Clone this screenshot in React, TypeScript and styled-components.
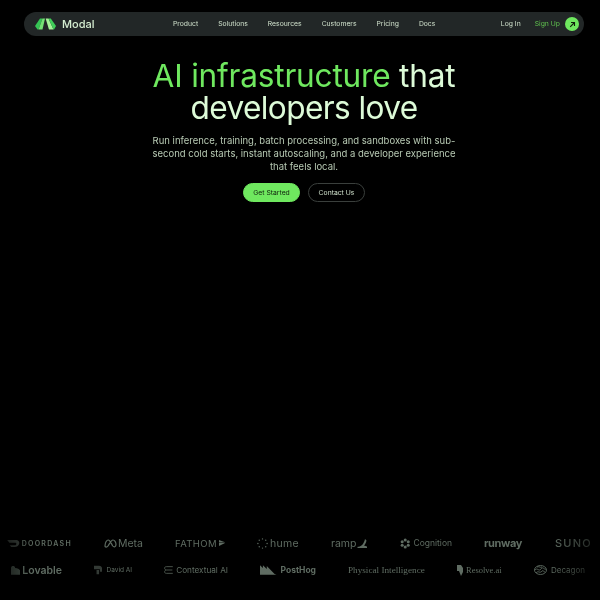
import React from "react";
import styled, { createGlobalStyle } from "styled-components";

const NAV_LINKS = ["Product", "Solutions", "Resources", "Customers", "Pricing", "Docs"];

const GlobalStyle = createGlobalStyle`
  html, body {
    margin: 0;
    padding: 0;
    background: #000000;
    overflow: hidden;
  }
  * {
    box-sizing: border-box;
  }
`;

const Page = styled.div`
  width: 600px;
  height: 600px;
  padding: 12px 16px 0 24px;
  display: flex;
  flex-direction: column;
  align-items: center;
  background: #000000;
  font-family: Inter, "Liberation Sans", sans-serif;
  overflow: hidden;
`;

const Nav = styled.nav`
  width: 560px;
  height: 24px;
  flex: none;
  padding: 0 5px 0 11px;
  display: flex;
  align-items: center;
  border-radius: 12px;
  background: #222727;
  will-change: transform;
`;

const Brand = styled.div`
  display: flex;
  align-items: center;
  gap: 6px;
  width: 138px;
  color: #d6efd2;
  font-size: 11px;
  font-weight: 500;
`;

const NavLinks = styled.div`
  display: flex;
  gap: 20px;
  flex: 1;
`;

const NavLink = styled.a<{ $accent?: boolean }>`
  color: ${(props) => (props.$accent ? "#5fc04e" : "#cfe0cb")};
  font-size: 6.8px;
  line-height: 24px;
`;

const NavActions = styled.div`
  display: flex;
  align-items: center;
  gap: 14px;
`;

const SignUp = styled.div`
  display: flex;
  align-items: center;
  gap: 5px;
`;

const ArrowBadge = styled.span`
  width: 14px;
  height: 14px;
  border-radius: 50%;
  display: flex;
  align-items: center;
  justify-content: center;
  background: #6fe85f;
`;

const Hero = styled.section`
  margin-top: 24px;
  display: flex;
  flex-direction: column;
  align-items: center;
  will-change: transform;
`;

const Title = styled.h1`
  margin: 0;
  width: 340px;
  text-align: center;
  color: #ddfbd8;
  font-size: 31.6px;
  line-height: 32px;
  font-weight: 400;
`;

const TitleLine = styled.span<{ $spacing: number }>`
  display: block;
  letter-spacing: ${(props) => props.$spacing}px;
`;

const Highlight = styled.span`
  color: #6fe85f;
`;

const Lead = styled.p`
  margin: 10px 0 0;
  width: 320px;
  text-align: center;
  color: #b7c9b3;
  font-size: 9.5px;
  line-height: 13px;
`;

const Actions = styled.div`
  margin-top: 10px;
  display: flex;
  gap: 8px;
`;

const Button = styled.a<{ $primary?: boolean }>`
  width: 57px;
  height: 19px;
  display: flex;
  align-items: center;
  justify-content: center;
  border-radius: 10px;
  border: 1px solid ${(props) => (props.$primary ? "#6fe85f" : "#3a3f3c")};
  background: ${(props) => (props.$primary ? "#6fe85f" : "transparent")};
  color: ${(props) => (props.$primary ? "#10200d" : "#cfe0cb")};
  font-size: 6.8px;
`;

const LogoWall = styled.div`
  width: 600px;
  margin: auto -16px 21px -24px;
  flex: none;
  display: flex;
  flex-direction: column;
  gap: 9px;
  mask-image: linear-gradient(to right, rgba(0, 0, 0, 0.35), #000 32px, #000 550px, rgba(0, 0, 0, 0.25));
`;

const LogoRow = styled.div<{ $offset: number }>`
  height: 18px;
  padding-left: ${(props) => props.$offset}px;
  display: flex;
  align-items: center;
  gap: 32px;
  white-space: nowrap;
`;

const Logo = styled.div<{ $width: number; $gap?: number }>`
  width: ${(props) => props.$width}px;
  flex: none;
  display: flex;
  align-items: center;
  gap: ${(props) => props.$gap ?? 3}px;
  color: #5f6c62;
`;

const LogoText = styled.span<{
  $size: number;
  $weight?: number;
  $spacing?: number;
  $serif?: boolean;
}>`
  font-family: ${(props) =>
    props.$serif ? '"Liberation Serif", serif' : 'Inter, "Liberation Sans", sans-serif'};
  font-size: ${(props) => props.$size}px;
  font-weight: ${(props) => props.$weight ?? 400};
  letter-spacing: ${(props) => props.$spacing ?? 0}px;
`;

const ModalMark = () => (
  <svg width="21" height="12" viewBox="0 0 21 12">
    <path d="M0 8 L5 0.5 H7.5 L3.5 11.5 H2.5 Z" fill="#35c454" />
    <path d="M7.5 0.5 H10 L7.5 11.5 H3.5 Z" fill="#74e274" />
    <path d="M10.6 0.5 H13.5 L18.5 11.5 H14 Z" fill="#a5f298" />
    <path d="M13.5 0.5 H15.8 L21 8 L19 11.5 H18.5 Z" fill="#3fcf58" />
  </svg>
);

const ArrowIcon = () => (
  <svg width="7" height="7" viewBox="0 0 7 7" fill="none" stroke="#10200d" strokeWidth="1.1">
    <path d="M1.2 5.8 L5.5 1.5 M2 1.5 H5.5 V5" />
  </svg>
);

const DoorDashMark = () => (
  <svg width="13" height="7" viewBox="0 0 14 8" fill="#3b423d">
    <path d="M0 0 H9.5 C13 0 14.5 2.4 13.6 4.6 C12.8 6.8 11 8 8.5 8 H4.5 L3 6 H8.8 C10.6 6 11.4 3 9 3 H2.5 Z" />
  </svg>
);

const MetaMark = () => (
  <svg width="13" height="9" viewBox="0 0 13 9" fill="none" stroke="#5f6c62" strokeWidth="1.2">
    <path d="M1 7 C1 3 3 1 4.2 1 C6 1 7.5 5 8.8 7 C10 8.6 12 8 12 5.6 C12 3 10.5 1 9 1 C7 1 5.5 5 4 7 C3 8.4 1 8.4 1 7 Z" />
  </svg>
);

const FathomMark = () => (
  <svg width="8" height="8" viewBox="0 0 8 8" fill="#5f6c62">
    <path d="M0 0 L8 3.2 H0 Z M0 4 H8 L0 8 Z" />
  </svg>
);

const HumeMark = () => (
  <svg width="11" height="11" viewBox="0 0 11 11" fill="#5f6c62">
    {[0, 45, 90, 135, 180, 225, 270, 315].map((angle) => (
      <circle
        key={angle}
        cx={5.5 + 4.6 * Math.cos((angle * Math.PI) / 180)}
        cy={5.5 + 4.6 * Math.sin((angle * Math.PI) / 180)}
        r="0.7"
      />
    ))}
  </svg>
);

const RampMark = () => (
  <svg width="10" height="9" viewBox="0 0 10 9" fill="#5f6c62">
    <path d="M0 8 C4 8 7 5 8 0 L9.5 1.5 C9 4 8 5.5 7 6.5 L10 7.5 V9 H1 Z" />
  </svg>
);

const CognitionMark = () => (
  <svg width="11" height="11" viewBox="0 0 11 11" fill="#5f6c62">
    {[30, 90, 150, 210, 270, 330].map((angle) => (
      <circle
        key={angle}
        cx={5.5 + 3.7 * Math.cos((angle * Math.PI) / 180)}
        cy={5.5 + 3.7 * Math.sin((angle * Math.PI) / 180)}
        r="1.6"
      />
    ))}
  </svg>
);

const LovableMark = () => (
  <svg width="10" height="10" viewBox="0 0 9 9" fill="#3f4a42">
    <path d="M0 9 V2.5 C0 0 4 0 4 2.5 C7 2.5 9 4 9 6 V9 Z" />
  </svg>
);

const DavidMark = () => (
  <svg width="10" height="10" viewBox="0 0 10 10" fill="#333a35">
    <path d="M0 0 H6 C9 0 10 3 10 5 V7 H7 V4 H0 Z M3 5 H6 V10 H3 Z" />
  </svg>
);

const ContextualMark = () => (
  <svg width="11" height="10" viewBox="0 0 11 10" fill="none" stroke="#5f6c62" strokeWidth="0.9">
    <path d="M10.5 1 H3 C0 1 0 4 2.5 5 C0 6 0 9 3 9 H10.5 M2.5 5 H10" />
  </svg>
);

const PostHogMark = () => (
  <svg width="17" height="10" viewBox="0 0 17 10" fill="#5f6c62">
    <path d="M0 0 L3 3 V0 L7 4 V1 L15 9 L17 10 H0 Z" />
  </svg>
);

const ResolveMark = () => (
  <svg width="6" height="11" viewBox="0 0 6 11" fill="#5f6c62">
    <path d="M0 0 H4 L6 3 V7 L4 11 L2 6 H0 Z" />
  </svg>
);

const DecagonMark = () => (
  <svg width="13" height="10" viewBox="0 0 13 10" fill="none" stroke="#5f6c62" strokeWidth="0.9">
    <ellipse cx="6.5" cy="5" rx="6" ry="4.5" />
    <path d="M1 5 C3 2 5 7 7 4 C9 1 10 5 12 4 M2 8 C4 5 6 9 8 6 C9 5 10 7 11 7 M3 2 C5 1 6 3 8 2" />
  </svg>
);

const App = () => {
  return (
    <Page>
      <GlobalStyle />
      <Nav>
        <Brand>
          <ModalMark />
          Modal
        </Brand>
        <NavLinks>
          {NAV_LINKS.map((link) => (
            <NavLink key={link}>{link}</NavLink>
          ))}
        </NavLinks>
        <NavActions>
          <NavLink>Log In</NavLink>
          <SignUp>
            <NavLink $accent>Sign Up</NavLink>
            <ArrowBadge>
              <ArrowIcon />
            </ArrowBadge>
          </SignUp>
        </NavActions>
      </Nav>

      <Hero>
        <Title>
          <TitleLine $spacing={-0.2}>
            <Highlight>AI infrastructure</Highlight> that
          </TitleLine>
          <TitleLine $spacing={-0.6}>developers love</TitleLine>
        </Title>
        <Lead>
          Run inference, training, batch processing, and sandboxes with sub-second cold starts,
          instant autoscaling, and a developer experience that feels local.
        </Lead>
        <Actions>
          <Button $primary>Get Started</Button>
          <Button>Contact Us</Button>
        </Actions>
      </Hero>

      <LogoWall>
        <LogoRow $offset={7}>
          <Logo $width={65} $gap={2}>
            <DoorDashMark />
            <LogoText $size={7} $weight={600} $spacing={1.3}>DOORDASH</LogoText>
          </Logo>
          <Logo $width={39} $gap={1}>
            <MetaMark />
            <LogoText $size={10.5}>Meta</LogoText>
          </Logo>
          <Logo $width={50} $gap={2}>
            <LogoText $size={9.5} $spacing={0.4}>FATHOM</LogoText>
            <FathomMark />
          </Logo>
          <Logo $width={42} $gap={2}>
            <HumeMark />
            <LogoText $size={10.5} $spacing={0.3}>hume</LogoText>
          </Logo>
          <Logo $width={37} $gap={1}>
            <LogoText $size={10.5}>ramp</LogoText>
            <RampMark />
          </Logo>
          <Logo $width={52}>
            <CognitionMark />
            <LogoText $size={8.5}>Cognition</LogoText>
          </Logo>
          <Logo $width={39}>
            <LogoText $size={11} $weight={700} $spacing={-0.4}>runway</LogoText>
          </Logo>
          <Logo $width={40}>
            <LogoText $size={11} $weight={500} $spacing={1.2}>SUNO</LogoText>
          </Logo>
        </LogoRow>
        <LogoRow $offset={11}>
          <Logo $width={51} $gap={2}>
            <LovableMark />
            <LogoText $size={10.5} $weight={600}>Lovable</LogoText>
          </Logo>
          <Logo $width={38} $gap={4}>
            <DavidMark />
            <LogoText $size={6.5}>David AI</LogoText>
          </Logo>
          <Logo $width={64}>
            <ContextualMark />
            <LogoText $size={8.2}>Contextual AI</LogoText>
          </Logo>
          <Logo $width={56} $gap={4}>
            <PostHogMark />
            <LogoText $size={8.5} $weight={700}>PostHog</LogoText>
          </Logo>
          <Logo $width={77}>
            <LogoText $size={9.2} $serif>Physical Intelligence</LogoText>
          </Logo>
          <Logo $width={45}>
            <ResolveMark />
            <LogoText $size={8.5} $serif>Resolve.ai</LogoText>
          </Logo>
          <Logo $width={51} $gap={4}>
            <DecagonMark />
            <LogoText $size={8}>Decagon</LogoText>
          </Logo>
        </LogoRow>
      </LogoWall>
    </Page>
  );
};

export default App;
